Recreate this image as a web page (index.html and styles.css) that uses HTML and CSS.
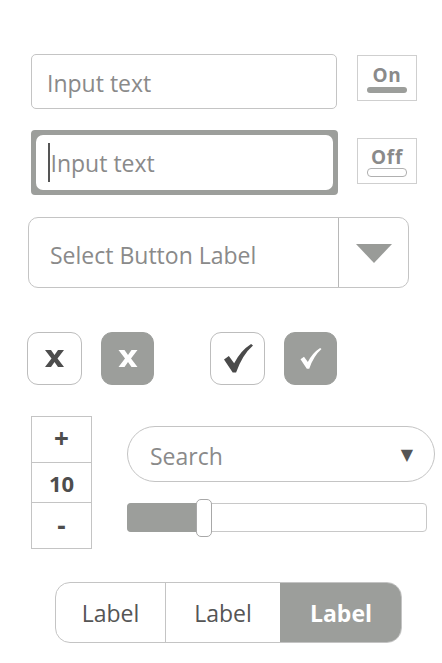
FILE: index.html
```html
<!DOCTYPE html>
<html>
<head>
<meta charset="utf-8">
<link rel="stylesheet" href="styles.css">
</head>
<body>
<div class="page">
  <div class="row row-1">
    <div class="input">Input text</div>
    <div class="toggle">
      <span class="toggle-label">On</span>
      <span class="pill pill-on"></span>
    </div>
  </div>
  <div class="row row-2">
    <div class="input input-focus"><span class="caret"></span>Input text</div>
    <div class="toggle">
      <span class="toggle-label">Off</span>
      <span class="pill pill-off"></span>
    </div>
  </div>
  <div class="select">
    <div class="select-label">Select Button Label</div>
    <div class="select-btn"><span class="tri"></span></div>
  </div>
  <div class="checks">
    <div class="cb">
      <svg width="19" height="17" viewBox="0 0 19 17"><path d="M0 0 H6 L9.5 5 L13 0 H19 L12.5 8.5 L19 17 H13 L9.5 12 L6 17 H0 L6.5 8.5 Z" fill="#4d4d4d"/></svg>
    </div>
    <div class="cb cb-filled">
      <svg width="20" height="17" viewBox="0 0 19 17"><path d="M0 0 H6 L9.5 5 L13 0 H19 L12.5 8.5 L19 17 H13 L9.5 12 L6 17 H0 L6.5 8.5 Z" fill="#fff"/></svg>
    </div>
    <div class="cb cb-gap">
      <svg width="29" height="29" viewBox="0 0 30 30"><path d="M0 16 L5 12.5 L10.5 20 Q17 7 28 0 L30 1.5 Q19 11 12.5 29.5 L9 29.5 Z" fill="#4a4a4a"/></svg>
    </div>
    <div class="cb cb-filled">
      <svg width="22" height="21" viewBox="0 0 30 30"><path d="M0 16 L5 12.5 L10.5 20 Q17 7 28 0 L30 1.5 Q19 11 12.5 29.5 L9 29.5 Z" fill="#fff"/></svg>
    </div>
  </div>
  <div class="row row-5">
    <div class="stepper">
      <div class="step step-btn step-plus">+</div>
      <div class="step step-val">10</div>
      <div class="step step-btn step-minus">-</div>
    </div>
    <div class="right-col">
      <div class="search">
        <span class="search-label">Search</span>
        <span class="search-tri">&#9660;</span>
      </div>
      <div class="slider">
        <div class="slider-fill"></div>
        <div class="slider-thumb"></div>
      </div>
    </div>
  </div>
  <div class="segmented">
    <div class="seg">Label</div>
    <div class="seg">Label</div>
    <div class="seg seg-active">Label</div>
  </div>
</div>
</body>
</html>
```
FILE: styles.css
```css
* { box-sizing: border-box; }
html, body { margin: 0; padding: 0; background: #fff; }
body {
  width: 442px;
  height: 663px;
  overflow: hidden;
  font-family: "Open Sans", "Noto Sans", sans-serif;
}
.page {
  padding-top: 54px;
  display: flex;
  flex-direction: column;
}
.row { display: flex; }
.row-1 { padding-left: 31px; align-items: flex-start; }
.row-2 { padding-left: 31px; margin-top: 21px; align-items: center; }

.input {
  width: 306px;
  height: 55px;
  border: 1px solid #c4c4c4;
  border-radius: 5px;
  display: flex;
  align-items: center;
  padding-left: 15px;
  padding-top: 3px;
  font-size: 23px;
  color: #8a8a8a;
}
.input-focus {
  width: 307px;
  height: 65px;
  border: 5px solid #9c9e9b;
  border-radius: 4px;
  padding-left: 12px;
  padding-top: 0;
  position: relative;
}
.input-focus::before {
  content: "";
  position: absolute;
  inset: 0;
  border-radius: 7px;
  box-shadow: 0 0 0 3px #9c9e9b;
  clip-path: inset(0);
  pointer-events: none;
}
.caret {
  width: 1.5px;
  height: 39px;
  background: #555;
  margin-right: 1px;
}
.toggle {
  width: 60px;
  height: 46px;
  margin-left: 20px;
  border: 1px solid #cfcfcf;
  display: flex;
  flex-direction: column;
  align-items: center;
  padding-top: 9px;
}
.row-1 .toggle { margin-top: 1px; }
.row-2 .toggle { margin-left: 19px; margin-top: -4px; padding-top: 8px; }
.toggle-label {
  font-weight: 700;
  font-size: 19px;
  line-height: 21px;
  color: #8a8a8a;
  letter-spacing: 0.8px;
}
.pill {
  width: 40px;
  border-radius: 4px;
  margin-top: 1px;
}
.pill-on { height: 6px; background: #9c9e9b; }
.pill-off { height: 9px; border: 1px solid #b0b0b0; margin-top: 0; }

.select {
  margin-top: 22px;
  margin-left: 28px;
  width: 381px;
  height: 71px;
  border: 1px solid #c4c4c4;
  border-radius: 10px;
  display: flex;
}
.select-label {
  flex: 1;
  display: flex;
  align-items: center;
  padding-left: 21px;
  padding-top: 4px;
  font-size: 23px;
  color: #8a8a8a;
  border-right: 1px solid #b8b8b8;
}
.select-btn {
  width: 69px;
  display: flex;
  align-items: center;
  justify-content: center;
}
.tri {
  width: 0; height: 0;
  border-left: 18px solid transparent;
  border-right: 18px solid transparent;
  border-top: 19px solid #999b98;
  margin-top: 2px;
}

.checks {
  margin-top: 44px;
  padding-left: 27px;
  display: flex;
}
.cb {
  width: 55px;
  height: 53px;
  border: 1px solid #bdbdbd;
  border-radius: 11px;
  display: flex;
  align-items: center;
  justify-content: center;
  margin-right: 19px;
}
.cb-filled { background: #9c9e9b; border-color: #9c9e9b; width: 53px; }
.cb-gap { margin-left: 36px; }
.cb-filled + .cb-gap { margin-left: 37px; }
.cb svg { display: block; }
.cb-gap svg { margin-left: 2px; }

.row-5 { margin-top: 31px; padding-left: 31px; align-items: flex-start; }
.stepper {
  width: 61px;
  border: 1px solid #c4c4c4;
  display: flex;
  flex-direction: column;
}
.step {
  display: flex;
  align-items: center;
  justify-content: center;
  font-weight: 700;
  color: #4d4d4d;
}
.step-btn { height: 45px; font-size: 26px; line-height: 1; }
.step-plus { padding-bottom: 3px; }
.step-minus { padding-bottom: 2px; }
.step-val {
  height: 41px;
  font-size: 22px;
  border-top: 1px solid #c4c4c4;
  border-bottom: 1px solid #c4c4c4;
}
.right-col {
  margin-left: 35px;
  margin-top: 10px;
  display: flex;
  flex-direction: column;
}
.search {
  width: 308px;
  height: 56px;
  border: 1px solid #c4c4c4;
  border-radius: 28px;
  display: flex;
  align-items: center;
  justify-content: space-between;
  padding-left: 22px;
  padding-right: 21px;
}
.search-label {
  font-size: 23px;
  color: #8a8a8a;
  padding-top: 3px;
}
.search-tri {
  font-family: "DejaVu Sans", sans-serif;
  font-size: 16px;
  color: #555;
}
.slider {
  position: relative;
  margin-top: 21px;
  width: 300px;
  height: 29px;
  border: 1px solid #c8c8c8;
  border-radius: 4px;
}
.slider-fill {
  position: absolute;
  left: -1px; top: -1px; bottom: -1px;
  width: 70px;
  background: #9c9e9b;
  border-radius: 4px 0 0 4px;
}
.slider-thumb {
  position: absolute;
  left: 68px;
  top: -5px;
  width: 16px;
  height: 38px;
  background: #fff;
  border: 1px solid #a8a8a8;
  border-radius: 5px;
}

.segmented {
  margin-top: 33px;
  margin-left: 55px;
  width: 347px;
  height: 61px;
  border: 1px solid #c4c4c4;
  border-radius: 15px;
  display: flex;
  overflow: hidden;
}
.seg {
  display: flex;
  align-items: center;
  justify-content: center;
  font-size: 23px;
  color: #555;
}
.seg:nth-child(1) { width: 110px; border-right: 1px solid #c4c4c4; }
.seg:nth-child(2) { width: 114px; }
.seg-active {
  flex: 1;
  background: #9c9e9b;
  color: #fff;
  font-weight: 700;
  margin: -1px -1px -1px 0;
}
```
